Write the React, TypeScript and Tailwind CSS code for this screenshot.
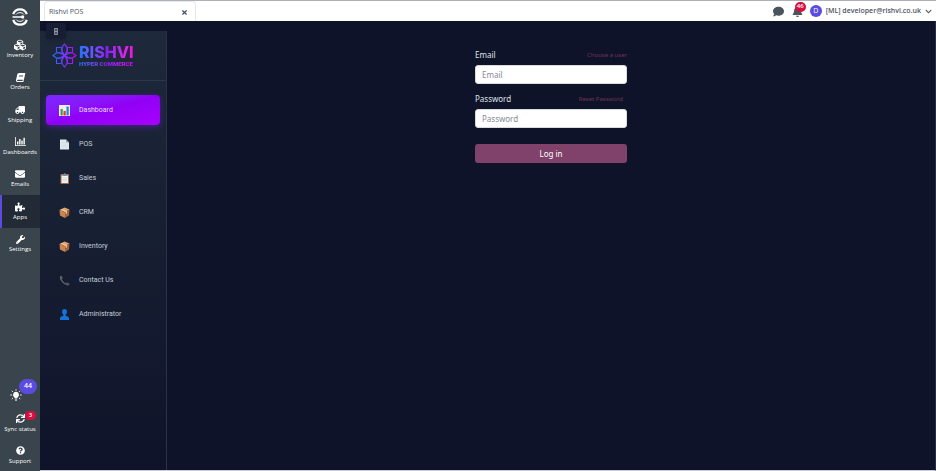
import type { ReactNode } from 'react'
import clsx from 'clsx'
import {
  FaBell,
  FaBook,
  FaChevronDown,
  FaComment,
  FaCubes,
  FaEnvelope,
  FaPuzzlePiece,
  FaQuestionCircle,
  FaSync,
  FaTimes,
  FaTruck,
  FaWrench,
} from 'react-icons/fa'

const BrandIcon = () => (
  <svg viewBox="0 0 16 18" className="w-4 h-[18px]" fill="none" stroke="#fff">
    <path d="M1.200 6.200C2.200 3 4.800 1.300 8 1.300s5.800 1.700 6.800 4.900" strokeWidth="2.200" />
    <path d="M1.200 11.800C2.200 15 4.800 16.700 8 16.700s5.800-1.700 6.800-4.900" strokeWidth="2.200" />
    <path
      d="M4 6.500C5 5.200 6.300 4.700 8 4.700s3 .5 4 1.800M4 11.500c1 1.300 2.300 1.800 4 1.800s3-.5 4-1.800"
      strokeWidth="1"
    />
    <path d="M.5 9h9" strokeWidth="1.500" />
    <circle cx="10.600" cy="9" r="1.700" fill="#fff" stroke="none" />
  </svg>
)

const BarsIcon = () => (
  <svg viewBox="0 0 22 18" className="w-[11px] h-[9px]" fill="#fff">
    <path d="M0 0h1.600v16.400H22V18H0z" />
    <path d="M4 9h2.800v6H4zM8.300 4h2.800v11H8.300zM12.600 7h2.800v8h-2.800zM16.900 1.500h2.800V15h-2.800z" />
  </svg>
)

const BulbIcon = () => (
  <svg viewBox="0 0 24 24" className="w-3 h-3" fill="#fff">
    <path d="M12 5.500a6 6 0 0 0-3.300 11c.6.500.8 1.200.8 2.200h5c0-1 .2-1.700.8-2.200A6 6 0 0 0 12 5.500zM9.500 19.700h5v1.500h-5zM10.500 22h3v1.500h-3z" />
    <path
      d="M12 .5v3M3.500 3.500l2.300 2.300M20.500 3.500l-2.300 2.300M.5 12h3.300M20.200 12h3.300M3.500 20l2.500-2.300M20.500 20L18 17.700"
      stroke="#fff"
      strokeWidth="1.800"
    />
  </svg>
)

const RishviIcon = () => (
  <svg viewBox="0 0 50 50" className="w-[25px] h-[25px]" fill="none" strokeWidth="2.200">
    <defs>
      <linearGradient id="mark" x1="0" y1="0" x2="50" y2="0" gradientUnits="userSpaceOnUse">
        <stop offset="0" stopColor="#1473ff" />
        <stop offset="0.450" stopColor="#6a3cf5" />
        <stop offset="1" stopColor="#c800ff" />
      </linearGradient>
    </defs>
    <g stroke="url(#mark)">
      <path d="M25 25c-8-7-8-15 0-23 8 8 8 16 0 23z" />
      <path d="M25 25c-8 7-8 15 0 23 8-8 8-16 0-23z" />
      <path d="M25 25c-7-8-15-8-23 0 8 8 16 8 23 0z" />
      <path d="M25 25c7-8 15-8 23 0-8 8-16 8-23 0z" />
      <path d="M19 9H9v10M31 9h10v10M19 41H9V31M31 41h10V31" />
      <path d="M9 19c5 0 10 2 16 6M19 9c0 5 2 10 6 16M41 19c-5 0-10 2-16 6M31 9c0 5-2 10-6 16M9 31c5 0 10-2 16-6M19 41c0-5 2-10 6-16M41 31c-5 0-10-2-16-6M31 41c0-5-2-10-6-16" />
    </g>
  </svg>
)

const ChartEmoji = () => (
  <svg viewBox="0 0 22 22" className="w-[11px] h-[11px]">
    <rect width="22" height="22" rx="1" fill="#f3f4f6" />
    <path d="M0 5.500h22M0 11h22M0 16.500h22M7.500 0v22M14.500 0v22" stroke="#cfd8dc" strokeWidth=".7" />
    <path d="M3 8h4.500v13H3z" fill="#43a047" />
    <path d="M9 12h4.500v9H9z" fill="#e53935" />
    <path d="M15 3h4.500v18H15z" fill="#1e88e5" />
  </svg>
)

const PageEmoji = () => (
  <svg viewBox="0 0 22 22" className="w-[11px] h-[11px]">
    <path d="M2 1h12l6 6v14H2z" fill="#dfe9ef" />
    <path d="M14 1l6 6h-6z" fill="#90a4ae" />
    <path d="M5 7h7M5 10h12M5 13h12M5 16h12" stroke="#c9d5dc" />
  </svg>
)

const ClipboardEmoji = () => (
  <svg viewBox="0 0 22 22" className="w-[11px] h-[11px]">
    <rect x="3" y="2" width="17" height="20" rx="1.500" fill="#a9683f" />
    <path d="M5 5h13v15H5z" fill="#eef3f6" />
    <path d="M7.500 2.500h2a2 2 0 0 1 4 0h2V6h-8z" fill="#78909c" />
    <path d="M7 10h9M7 13h9M7 16h9" stroke="#c3ced4" />
  </svg>
)

const BoxEmoji = () => (
  <svg viewBox="0 0 22 22" className="w-[11px] h-[11px]">
    <path d="M1 6l10-5 10 4-9 5.500z" fill="#e2a571" />
    <path d="M1 6l11 4.500V22L2 17z" fill="#c98550" />
    <path d="M21 5l-9 5.500V22l8-5z" fill="#a5633a" />
    <path d="M5 4l11 4.500v4l-2.500 1.300V9.700L3 5z" fill="#f0cfa6" />
  </svg>
)

const PhoneEmoji = () => (
  <svg viewBox="0 0 22 22" className="w-[11px] h-[11px]">
    <path
      d="M2 2.500C3.500.8 5.500 1 6.300 2.800l1 3c.4 1.400-.8 2-1.800 2.900C7 12 10 15 13.500 16.600c1-1 1.700-2.200 3-1.700l3.200 1.200c1.800.8 1.700 3 0 4.200-2.600 1.700-6.700.4-11-3.600C3.800 12 .3 6 2 2.500z"
      fill="#53555c"
    />
    <path d="M3 3c-1 4 3 10.500 8 14" fill="none" stroke="#7c7e86" />
  </svg>
)

const PersonEmoji = () => (
  <svg viewBox="0 0 22 22" className="w-[11px] h-[11px]" fill="#1673d6">
    <path d="M11 0c3.300 0 5 2.300 5 5.700 0 3.500-2 6.800-5 6.800S6 9.200 6 5.700C6 2.300 7.700 0 11 0z" />
    <path d="M8.500 11h5v3c4.500.6 6.500 2.300 6.500 5v3H2v-3c0-2.700 2-4.400 6.500-5z" />
  </svg>
)

const railItems = [
  { label: 'Inventory', icon: <FaCubes size={12} /> },
  { label: 'Orders', icon: <FaBook size={9} className="-skew-x-12" /> },
  { label: 'Shipping', icon: <FaTruck size={10} className="-scale-x-100" /> },
  { label: 'Dashboards', icon: <BarsIcon /> },
  { label: 'Emails', icon: <FaEnvelope size={10} /> },
  { label: 'Apps', icon: <FaPuzzlePiece size={10} />, active: true },
  { label: 'Settings', icon: <FaWrench size={9} /> },
]

const menuItems = [
  { label: 'Dashboard', icon: <ChartEmoji />, active: true },
  { label: 'POS', icon: <PageEmoji /> },
  { label: 'Sales', icon: <ClipboardEmoji /> },
  { label: 'CRM', icon: <BoxEmoji /> },
  { label: 'Inventory', icon: <BoxEmoji /> },
  { label: 'Contact Us', icon: <PhoneEmoji /> },
  { label: 'Administrator', icon: <PersonEmoji /> },
]

const RailLink = ({
  label,
  icon,
  active,
}: {
  label: string
  icon: ReactNode
  active?: boolean
}) => (
  <a
    href="#"
    className={clsx(
      'flex flex-1 flex-col items-center justify-center text-[6px] leading-[9px] font-medium text-white',
      active && 'bg-[#222b35] shadow-[inset_2px_0_0_#5b4be0]'
    )}
  >
    <span className="flex h-3 items-center">{icon}</span>
    {label}
  </a>
)

const Rail = () => (
  <nav className="flex w-10 shrink-0 flex-col bg-[#3a444d]">
    <a href="#" aria-label="Home" className="flex h-[33px] items-center justify-center">
      <BrandIcon />
    </a>
    <div className="flex h-[227px] flex-col">
      {railItems.map((item) => (
        <RailLink key={item.label} {...item} />
      ))}
    </div>
    <div className="mt-auto flex flex-col">
      <button type="button" aria-label="Tips" className="relative flex h-6 items-center pl-[10px]">
        <BulbIcon />
        <span className="absolute left-[19px] -top-1 flex h-[15px] w-[18px] items-center justify-center rounded-full bg-[#5b4be0] text-[7px] font-semibold text-white">
          44
        </span>
      </button>
      <div className="relative flex h-8 flex-col">
        <RailLink label="Sync status" icon={<FaSync size={9} />} />
        <span className="absolute left-[25px] top-1 flex h-[9px] w-[11px] items-center justify-center rounded-full bg-[#d5103f] text-[6px] font-semibold text-white">
          3
        </span>
      </div>
      <div className="flex h-8 flex-col">
        <RailLink label="Support" icon={<FaQuestionCircle size={9} />} />
      </div>
    </div>
  </nav>
)

const TopBar = () => (
  <header className="flex h-[21px] shrink-0 items-center justify-between border-t border-[#aeb0b8] bg-white text-[#4a545e]">
    <div className="ml-1 flex h-full w-[152px] items-center justify-between rounded-t-sm border border-b-0 border-gray-200 pt-px pl-1 pr-[7px]">
      <span className="text-[7px]">Rishvi POS</span>
      <button type="button" aria-label="Close tab">
        <FaTimes size={7} />
      </button>
    </div>
    <div className="flex items-center pr-1">
      <button type="button" aria-label="Messages">
        <FaComment size={11} />
      </button>
      <button type="button" aria-label="Notifications" className="relative ml-2">
        <FaBell size={11} />
        <span className="absolute -top-1 left-[3px] flex h-[10px] w-[11px] items-center justify-center rounded-full bg-[#d5103f] text-[6px] font-semibold text-white">
          46
        </span>
      </button>
      <span className="ml-[7px] flex h-3 w-3 items-center justify-center rounded-full bg-[#5b4be0] text-[7px] text-white">
        D
      </span>
      <button type="button" className="ml-1 flex items-center gap-1 text-[7px] font-semibold">
        [ML] developer@rishvi.co.uk
        <FaChevronDown size={7} />
      </button>
    </div>
  </header>
)

const Sidebar = () => (
  <aside className="relative mt-[10px] w-[127px] shrink-0 border-r border-[#283347] bg-linear-to-b from-[#1e293b] to-[#0f1329] font-[Roboto,sans-serif]">
    <button
      type="button"
      aria-label="Toggle menu"
      className="absolute -top-2 left-[6px] flex h-4 w-5 items-center justify-center rounded-xs bg-[#171e33] shadow-md"
    >
      <svg viewBox="0 0 8 14" className="h-[7px] w-1" fill="none" stroke="#a3adba" strokeWidth="1.500">
        <path d="M1 1h6v12H1zM1 7h6M4 1v12" />
      </svg>
    </button>
    <div className="flex h-[50px] items-center gap-[2px] border-b border-[#2b374a] pl-3">
      <RishviIcon />
      <div className="flex flex-col">
        <span className="bg-linear-to-r from-[#1473ff] via-[#8b1cf7] to-[#ff00e1] bg-clip-text font-[Inter,sans-serif] text-[16px] leading-4 font-extrabold text-transparent">
          RISHVI
        </span>
        <span className="bg-linear-to-r from-[#1473ff] via-[#8b1cf7] to-[#e000e8] bg-clip-text text-[6px] leading-[8px] font-black text-transparent">
          HYPER COMMERCE
        </span>
      </div>
    </div>
    <nav className="flex flex-col gap-1 pt-[14px] pr-[6px] pl-[6px]">
      {menuItems.map((item) => (
        <a
          key={item.label}
          href="#"
          className={clsx(
            'flex h-[30px] items-center gap-[9px] rounded-sm pl-[13px] text-[7px]',
            item.active
              ? 'bg-linear-to-br from-[#7a28ff] via-[#9000f5] to-[#a800ff] text-[#eadcff] shadow-[0_2px_6px_#7c1fff66]'
              : 'text-[#c5cdd8]'
          )}
        >
          {item.icon}
          {item.label}
        </a>
      ))}
    </nav>
  </aside>
)

const inputClass =
  'h-[19px] w-full rounded-[3px] border border-[#d8dadd] bg-white px-[6px] text-[8px] text-gray-800 placeholder:text-[#858b92] outline-none'

const LoginForm = () => (
  <form className="flex w-[152px] flex-col font-['Noto_Sans',sans-serif] text-[8px] leading-3 text-[#dfe2e8]">
    <div className="mb-1 flex h-3 items-center justify-between">
      <label htmlFor="email">Email</label>
      <a href="#" className="text-[6px] text-[#6b3557]">
        Choose a user
      </a>
    </div>
    <input id="email" type="email" placeholder="Email" className={inputClass} />
    <div className="mt-[9px] mb-1 flex h-3 items-center justify-between pr-1">
      <label htmlFor="password">Password</label>
      <a href="#" className="text-[6px] text-[#6b3557]">
        Reset Password
      </a>
    </div>
    <input id="password" type="password" placeholder="Password" className={inputClass} />
    <button type="submit" className="mt-4 h-[19px] rounded-[3px] bg-[#80416b] text-white">
      Log in
    </button>
  </form>
)

export default function App() {
  return (
    <div className="flex h-screen min-h-[420px] font-['Open_Sans',sans-serif]">
      <Rail />
      <div className="flex min-w-0 flex-1 flex-col">
        <TopBar />
        <div className="flex min-h-0 flex-1 border-r border-b border-r-[#2a2e42] border-b-[#c9cad2] bg-[#0f1329]">
          <Sidebar />
          <main className="flex flex-1 justify-center pt-7">
            <LoginForm />
          </main>
        </div>
      </div>
    </div>
  )
}
